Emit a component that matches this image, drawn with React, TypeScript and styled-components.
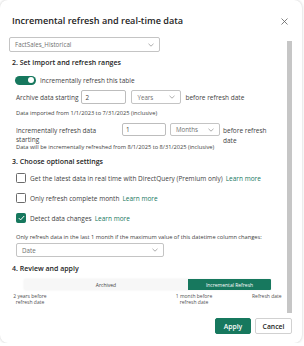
import React from "react";
import styled, { createGlobalStyle } from "styled-components";

const Global = createGlobalStyle`
  html, body { margin: 0; padding: 0; background: #ffffff; }
  body { font-family: "Open Sans", "Noto Sans", sans-serif; color: #242424; }
  * { box-sizing: border-box; }
`;

const GREEN = "#17785e";

const Dialog = styled.div`
  width: 302px;
  height: 343px;
  background: #ffffff;
  border-radius: 8px;
  box-shadow: 0 0 3px rgba(0, 0, 0, 0.22);
  display: flex;
  flex-direction: column;
  overflow: hidden;
`;

const Header = styled.div`
  height: 37px;
  display: flex;
  align-items: flex-start;
  justify-content: space-between;
  padding: 14px 14px 0 12px;
`;

const Title = styled.h1`
  margin: 0;
  font-size: 9.1px;
  line-height: 14px;
  font-weight: 600;
  color: #242424;
`;

const CloseBtn = styled.button`
  border: 0;
  background: none;
  padding: 0;
  width: 8px;
  height: 14px;
  display: flex;
  align-items: center;
  justify-content: center;
`;

const Body = styled.div`
  height: 277px;
  display: flex;
`;

const Content = styled.div`
  flex: 1;
  display: flex;
  flex-direction: column;
  padding-left: 9px;
`;

const Scrollbar = styled.div`
  width: 5px;
  height: 272px;
  margin: 4px 10px 0 0;
  background: #c6c6c6;
`;

const SelectBox = styled.div<{ $w: number; $h: number; $ml?: number; $mt?: number }>`
  width: ${(p) => p.$w}px;
  height: ${(p) => p.$h}px;
  margin-left: ${(p) => p.$ml ?? 0}px;
  margin-top: ${(p) => p.$mt ?? 0}px;
  flex-shrink: 0;
  border: 1px solid #c4c4c4;
  border-radius: 2px;
  display: flex;
  align-items: center;
  justify-content: space-between;
  padding: 0 5px 0 5px;
  font-size: 6.2px;
  color: #707070;
  background: #fff;
`;

const InputBox = styled.div<{ $w: number; $h: number }>`
  width: ${(p) => p.$w}px;
  height: ${(p) => p.$h}px;
  flex-shrink: 0;
  border: 1px solid #bdbdbd;
  border-radius: 2px;
  display: flex;
  align-items: center;
  padding-left: 3px;
  font-size: 6.3px;
  color: #424242;
`;

const Heading = styled.h2<{ $mt: number }>`
  margin: ${(p) => p.$mt}px 0 0 3px;
  font-size: 7px;
  line-height: 10px;
  font-weight: 600;
  color: #242424;
`;

const ToggleRow = styled.div`
  display: flex;
  align-items: center;
  height: 10px;
  margin: 7px 0 0 6px;
  gap: 4px;
  font-size: 6.5px;
  color: #424242;
`;

const Toggle = styled.div`
  width: 21px;
  height: 9px;
  border-radius: 5px;
  background: ${GREEN};
  display: flex;
  align-items: center;
  justify-content: flex-end;
  padding-right: 2px;
`;

const Knob = styled.div`
  width: 6px;
  height: 6px;
  border-radius: 50%;
  background: #fff;
`;

const FieldRow = styled.div<{ $mt: number }>`
  display: flex;
  align-items: flex-start;
  margin: ${(p) => p.$mt}px 0 0 7px;
  font-size: 6.5px;
  color: #424242;
`;

const Label = styled.div<{ $w?: number; $top: number; $lh: number }>`
  width: ${(p) => (p.$w ? `${p.$w}px` : "auto")};
  margin-top: ${(p) => p.$top}px;
  line-height: ${(p) => p.$lh}px;
  flex-shrink: 0;
`;

const FieldGap = styled.div<{ $w: number }>`
  width: ${(p) => p.$w}px;
  flex-shrink: 0;
`;

const Note = styled.div<{ $mt: number }>`
  margin: ${(p) => p.$mt}px 0 0 7px;
  font-size: 5.7px;
  line-height: 7px;
  color: #424242;
  white-space: nowrap;
`;

const CheckRow = styled.div<{ $mt: number }>`
  display: flex;
  align-items: center;
  height: 10px;
  margin: ${(p) => p.$mt}px 0 0 7px;
  gap: 4px;
  font-size: 6.5px;
  color: #424242;
  white-space: nowrap;
`;

const Check = styled.div<{ $on?: boolean }>`
  width: 10px;
  height: 10px;
  border-radius: 1.5px;
  border: 1px solid ${(p) => (p.$on ? GREEN : "#6b6b6b")};
  background: ${(p) => (p.$on ? GREEN : "#fff")};
  display: flex;
  align-items: center;
  justify-content: center;
  flex-shrink: 0;
`;

const Link = styled.a`
  color: ${GREEN};
  text-decoration: none;
  margin-left: 3px;
`;

const Bar = styled.div`
  display: flex;
  margin: 5px 0 0 15px;
  width: 247px;
  height: 11px;
  border-radius: 1px;
  box-shadow: 0 0 2px rgba(0, 0, 0, 0.08);
`;

const Segment = styled.div<{ $w: number; $active?: boolean }>`
  width: ${(p) => p.$w}px;
  display: flex;
  align-items: center;
  justify-content: center;
  font-size: 5px;
  color: ${(p) => (p.$active ? "#ffffff" : "#424242")};
  background: ${(p) => (p.$active ? GREEN : "#f7f7f7")};
  border-radius: ${(p) => (p.$active ? "0 1px 1px 0" : "1px 0 0 1px")};
`;

const Ticks = styled.div`
  display: grid;
  grid-template-columns: 34px 127px 40px 38px 28px;
  margin: 2.5px 0 0 4px;
  font-size: 5px;
  line-height: 6.5px;
  color: #505050;
  text-align: center;
`;

const Tick = styled.div<{ $col: number }>`
  grid-column: ${(p) => p.$col};
  white-space: nowrap;
`;

const Footer = styled.div`
  display: flex;
  justify-content: flex-end;
  gap: 4px;
  padding: 4px 10px 0 0;
`;

const Button = styled.button<{ $primary?: boolean; $w: number }>`
  width: ${(p) => p.$w}px;
  height: 16px;
  padding: 0;
  border-radius: 2px;
  font-family: inherit;
  font-size: 6.8px;
  font-weight: 600;
  border: 1px solid ${(p) => (p.$primary ? GREEN : "#d1d1d1")};
  background: ${(p) => (p.$primary ? GREEN : "#ffffff")};
  color: ${(p) => (p.$primary ? "#ffffff" : "#242424")};
`;

const Chevron = () => (
  <svg width="6" height="4" viewBox="0 0 6 4">
    <path d="M0.5 0.8 L3 3.2 L5.5 0.8" fill="none" stroke="#8a8a8a" strokeWidth="0.7" />
  </svg>
);

const CheckMark = () => (
  <svg width="7" height="6" viewBox="0 0 7 6">
    <path d="M0.8 3.1 L2.6 4.9 L6.2 1" fill="none" stroke="#fff" strokeWidth="1" />
  </svg>
);

export default function App() {
  return (
    <>
      <Global />
      <Dialog>
        <Header>
          <Title>Incremental refresh and real-time data</Title>
          <CloseBtn aria-label="Close">
            <svg width="7" height="7" viewBox="0 0 7 7">
              <path d="M0.5 0.5 L6.5 6.5 M6.5 0.5 L0.5 6.5" stroke="#616161" strokeWidth="0.8" />
            </svg>
          </CloseBtn>
        </Header>
        <Body>
          <Content>
            <SelectBox $w={151} $h={15}>
              <span>FactSales_Historical</span>
              <Chevron />
            </SelectBox>
            <Heading $mt={6}>2. Set import and refresh ranges</Heading>
            <ToggleRow>
              <Toggle>
                <Knob />
              </Toggle>
              <span>Incrementally refresh this table</span>
            </ToggleRow>
            <FieldRow $mt={5}>
              <Label $top={2.5} $lh={9}>Archive data starting</Label>
              <FieldGap $w={3} />
              <InputBox $w={45} $h={14}>2</InputBox>
              <SelectBox $w={50} $h={14} $ml={5}>
                <span>Years</span>
                <Chevron />
              </SelectBox>
              <FieldGap $w={4} />
              <Label $top={2.5} $lh={9}>before refresh date</Label>
            </FieldRow>
            <Note $mt={6}>Data imported from 1/1/2023 to 7/31/2025 (inclusive)</Note>
            <FieldRow $mt={6}>
              <Label $w={88} $top={2.5} $lh={9}>Incrementally refresh data starting</Label>
              <FieldGap $w={18} />
              <InputBox $w={44} $h={13}>1</InputBox>
              <SelectBox $w={50} $h={13} $ml={4}>
                <span>Months</span>
                <Chevron />
              </SelectBox>
              <FieldGap $w={3} />
              <Label $w={46} $top={2.5} $lh={10}>before refresh date</Label>
            </FieldRow>
            <Note $mt={-2}>Data will be incrementally refreshed from 8/1/2025 to 8/31/2025 (inclusive)</Note>
            <Heading $mt={6.5}>3. Choose optional settings</Heading>
            <CheckRow $mt={6}>
              <Check />
              <span>
                Get the latest data in real time with DirectQuery (Premium only)
                <Link>Learn more</Link>
              </span>
            </CheckRow>
            <CheckRow $mt={10}>
              <Check />
              <span>
                Only refresh complete month
                <Link>Learn more</Link>
              </span>
            </CheckRow>
            <CheckRow $mt={10}>
              <Check $on>
                <CheckMark />
              </Check>
              <span>
                Detect data changes
                <Link>Learn more</Link>
              </span>
            </CheckRow>
            <Note $mt={10.5}>
              Only refresh data in the last 1 month if the maximum value of this datetime column changes:
            </Note>
            <SelectBox $w={148} $h={14} $ml={7} $mt={2.5}>
              <span>Date</span>
              <Chevron />
            </SelectBox>
            <Heading $mt={7}>4. Review and apply</Heading>
            <Bar>
              <Segment $w={164}>Archived</Segment>
              <Segment $w={83} $active>
                Incremental Refresh
              </Segment>
            </Bar>
            <Ticks>
              <Tick $col={1}>
                2 years before
                <br />
                refresh date
              </Tick>
              <Tick $col={3}>
                1 month before
                <br />
                refresh date
              </Tick>
              <Tick $col={5}>Refresh date</Tick>
            </Ticks>
          </Content>
          <Scrollbar />
        </Body>
        <Footer>
          <Button $primary $w={36}>Apply</Button>
          <Button $w={37}>Cancel</Button>
        </Footer>
      </Dialog>
    </>
  );
}
